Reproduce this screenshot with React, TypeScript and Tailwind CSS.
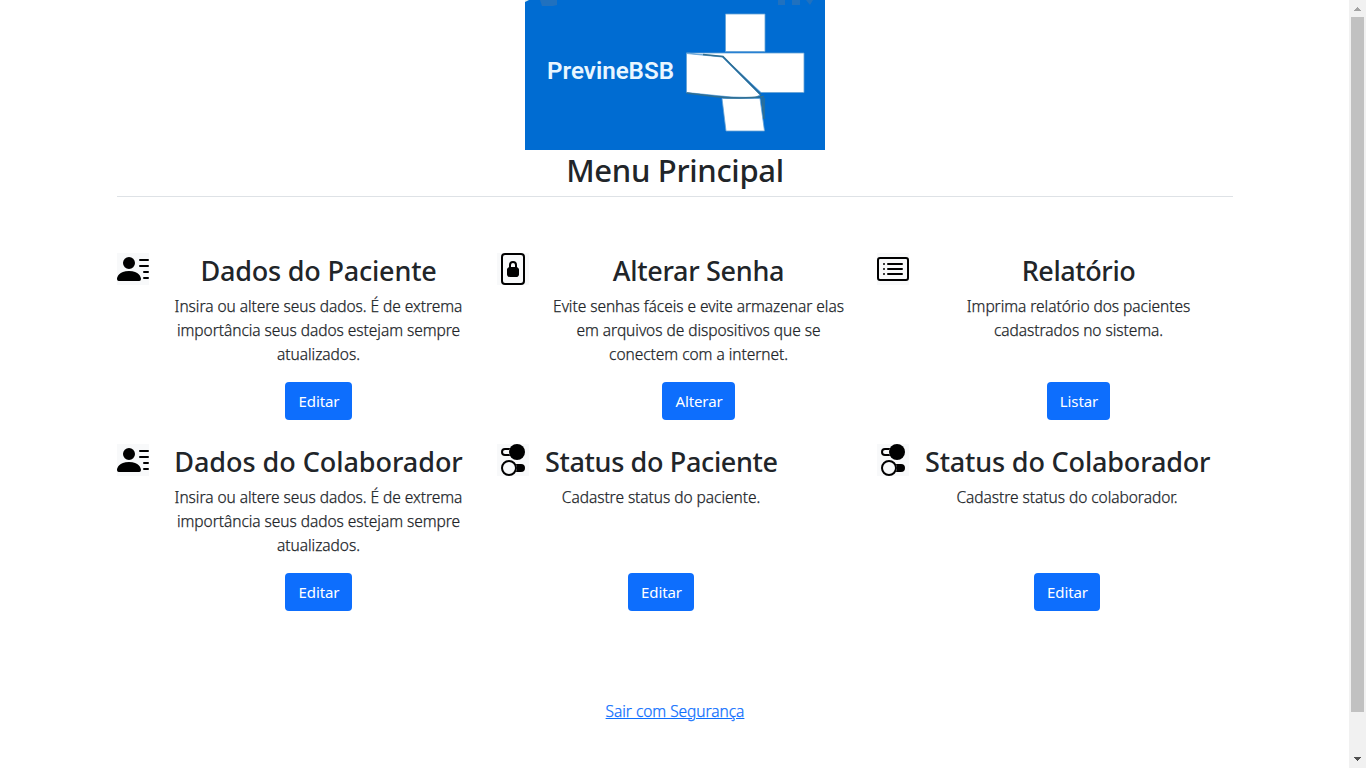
import type { ComponentType } from "react";
import { BsPersonLinesFill, BsFileLock2, BsCardList, BsToggles2 } from "react-icons/bs";

type Item = {
  title: string;
  lines: string[];
  action: string;
  Icon: ComponentType<{ className?: string }>;
  body: string;
  heading: string;
  button: string;
};

const dados = ["Insira ou altere seus dados. É de extrema", "importância seus dados estejam sempre", "atualizados."];

const items: Item[] = [
  { title: "Dados do Paciente", lines: dados, action: "Editar", Icon: BsPersonLinesFill, body: "w-[307px]", heading: "tracking-[-0.2px]", button: "w-[67px]" },
  {
    title: "Alterar Senha",
    lines: ["Evite senhas fáceis e evite armazenar elas", "em arquivos de dispositivos que se", "conectem com a internet."],
    action: "Alterar",
    Icon: BsFileLock2,
    body: "w-[307px]",
    heading: "tracking-[-0.3px]",
    button: "w-[73px]",
  },
  {
    title: "Relatório",
    lines: ["Imprima relatório dos pacientes", "cadastrados no sistema."],
    action: "Listar",
    Icon: BsCardList,
    body: "w-[307px]",
    heading: "tracking-[-0.4px]",
    button: "w-[63px]",
  },
  { title: "Dados do Colaborador", lines: dados, action: "Editar", Icon: BsPersonLinesFill, body: "w-[307px]", heading: "tracking-[-0.05px]", button: "w-[67px]" },
  { title: "Status do Paciente", lines: ["Cadastre status do paciente."], action: "Editar", Icon: BsToggles2, body: "w-[232px]", heading: "tracking-[-0.35px]", button: "w-[66px]" },
  { title: "Status do Colaborador", lines: ["Cadastre status do colaborador."], action: "Editar", Icon: BsToggles2, body: "w-[284px]", heading: "tracking-[-0.17px]", button: "w-[66px]" },
];

function Logo() {
  return (
    <svg className="block h-[150px] w-[300px]" viewBox="0 0 300 150">
      <rect width="300" height="150" fill="#006cd2" />
      <path d="M0 0H4L0 2Z" fill="#e8f4ee" />
      <g fill="#2071bf">
        <path d="M15 0H32V5L28 6H17Z" />
        <path d="M253 0H260V5H253ZM267 0H275V5H267ZM281 0H288L285 5Z" />
      </g>
      <g fill="#fff" stroke="#64a2d4" strokeWidth="0.8">
        <path d="M200.5 14H240V51.5H200.5Z" />
        <path d="M161.5 53H279V92.5H236L198 56.5L180 55Z" />
        <path d="M161.5 53.5L197 57L235 95L230 97.5L206 97L161.5 92.5Z" />
        <path d="M197 98.5H235L239.5 131H201Z" />
      </g>
      <path d="M178 54.5L198 56.5L236 95M161.5 93L190 96.5Q215 99.5 239 96.5M236.5 96L239 119V98" fill="none" stroke="#316f91" strokeWidth="1.4" />
      <text x="22" y="79" fontFamily="Roboto, sans-serif" fontSize="23" fontWeight="600" fill="#e9f6ff" textLength="127" lengthAdjust="spacingAndGlyphs">
        PrevineBSB
      </text>
    </svg>
  );
}

function MenuCard({ title, lines, action, Icon, body, heading, button }: Item) {
  return (
    <section className="flex h-[191px] items-start">
      <div className="mr-4 h-8 w-8 shrink-0 bg-[#f8f9fa] text-black">
        <Icon className="h-8 w-8" />
      </div>
      <div className={`${body} shrink-0 text-center`}>
        <h2 className={`${heading} mb-[5px] h-9 text-[27px] leading-9 font-medium whitespace-nowrap`}>{title}</h2>
        <div className="mb-4 h-[72px] text-[15.5px] leading-6 font-light tracking-[-0.04px] whitespace-nowrap [-webkit-text-stroke:0.25px_currentColor]">
          {lines.map((line) => (
            <p key={line}>{line}</p>
          ))}
        </div>
        <button className={`${button} h-[38px] rounded bg-[#0d6efd] pl-px text-center text-[15px] leading-6 tracking-[-0.1px] text-white`}>{action}</button>
      </div>
    </section>
  );
}

function ScrollBar() {
  return (
    <div className="flex h-full w-[17px] shrink-0 flex-col items-center bg-[#f1f1f1]">
      <svg className="h-[17px] w-[17px] shrink-0" viewBox="0 0 17 17" shapeRendering="crispEdges">
        <path d="M5 11H12L8.5 7Z" fill="#a3a3a3" />
      </svg>
      <div className="h-[695px] w-[13px] shrink-0 bg-[#c1c1c1]" />
      <div className="grow" />
      <svg className="h-[17px] w-[17px] shrink-0" viewBox="0 0 17 17" shapeRendering="crispEdges">
        <path d="M5 6H12L8.5 10Z" fill="#505050" />
      </svg>
    </div>
  );
}

export default function App() {
  return (
    <div className="flex h-screen w-full overflow-hidden bg-white font-['Noto_Sans',sans-serif] text-[#212529]">
      <main className="flex grow flex-col items-center">
        <div className="ml-px flex w-[1116px] flex-col items-center">
          <Logo />
          <h1 className="h-[47px] w-full border-b border-[#dee2e6] text-center text-[31px] leading-[41px] font-medium tracking-[-0.3px]">
            Menu Principal
          </h1>
          <div className="mt-14 grid w-full grid-cols-[380px_380px_356px]">
            {items.map((item) => (
              <MenuCard key={item.title} {...item} />
            ))}
          </div>
          <a href="#" className="mt-16 text-[15.5px] leading-6 font-light tracking-[-0.04px] text-[#0d6efd] underline [-webkit-text-stroke:0.25px_currentColor]">
            Sair com Segurança
          </a>
        </div>
      </main>
      <ScrollBar />
    </div>
  );
}
